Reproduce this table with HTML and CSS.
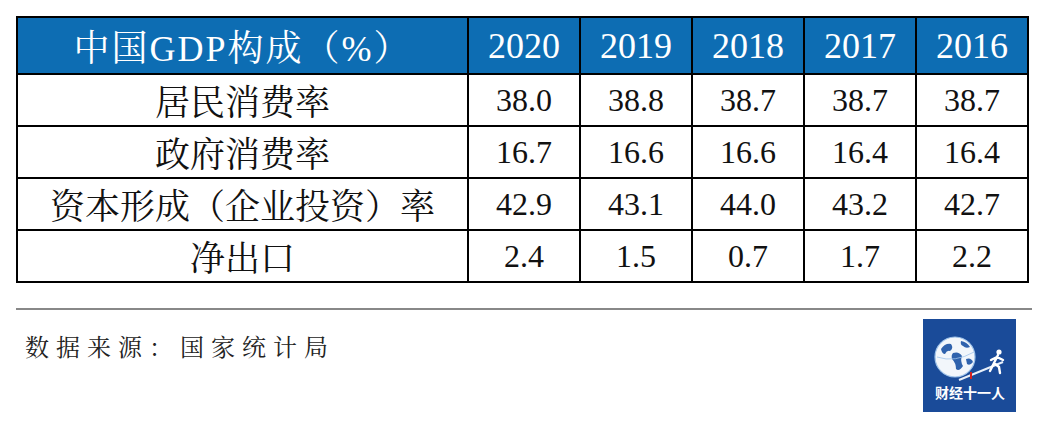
FILE: index.html
```html
<!DOCTYPE html>
<html lang="zh">
<head>
<meta charset="utf-8">
<link rel="stylesheet" href="styles.css">
</head>
<body>
<div class="page">
  <div class="grid">
    <div class="cell head label title">中国GDP构成（%）</div>
    <div class="cell head">2020</div>
    <div class="cell head">2019</div>
    <div class="cell head">2018</div>
    <div class="cell head">2017</div>
    <div class="cell head">2016</div>

    <div class="cell label">居民消费率</div>
    <div class="cell num">38.0</div>
    <div class="cell num">38.8</div>
    <div class="cell num">38.7</div>
    <div class="cell num">38.7</div>
    <div class="cell num">38.7</div>

    <div class="cell label">政府消费率</div>
    <div class="cell num">16.7</div>
    <div class="cell num">16.6</div>
    <div class="cell num">16.6</div>
    <div class="cell num">16.4</div>
    <div class="cell num">16.4</div>

    <div class="cell label">资本形成（企业投资）率</div>
    <div class="cell num">42.9</div>
    <div class="cell num">43.1</div>
    <div class="cell num">44.0</div>
    <div class="cell num">43.2</div>
    <div class="cell num">42.7</div>

    <div class="cell label">净出口</div>
    <div class="cell num">2.4</div>
    <div class="cell num">1.5</div>
    <div class="cell num">0.7</div>
    <div class="cell num">1.7</div>
    <div class="cell num">2.2</div>
  </div>

  <div class="rule"></div>

  <div class="footer">
    <div class="source">数据来源：国家统计局</div>
    <div class="logo">
      <svg width="93" height="93" viewBox="0 0 93 93">
        <rect x="0" y="0" width="93" height="93" fill="#1a4b99"/>
        <circle cx="32" cy="38" r="20" fill="#f2f6fb" stroke="#9fc3ea" stroke-width="1.2"/>
        <path d="M18 30 Q22 24 28 25 Q31 29 27 32 Q24 31 22 35 Q19 35 18 30 Z" fill="#2f62ad"/>
        <path d="M30 34 Q36 32 39 37 Q37 42 40 47 Q36 53 33 50 Q33 44 29 40 Q28 36 30 34 Z" fill="#2f62ad"/>
        <path d="M38 22 Q44 23 47 28 Q43 30 40 27 Q37 26 38 22 Z" fill="#2f62ad"/>
        <path d="M43 40 Q48 38 50 43 Q47 47 44 45 Z" fill="#2f62ad"/>
        <path d="M14 38 Q32 44 51 33" fill="none" stroke="#9fc3ea" stroke-width="0.8"/>
        <path d="M36 61 L80 43" stroke="#e8f0fa" stroke-width="2" fill="none"/>
        <path d="M48 53 L48 60" stroke="#d42020" stroke-width="2"/>
        <circle cx="76" cy="33" r="2.6" fill="#ffffff"/>
        <path d="M75 36 L71 44 L67 52 M71 44 L76 48 L77 54 M74 38 L80 41 M74 38 L68 41" stroke="#ffffff" stroke-width="2.4" fill="none" stroke-linecap="round"/>
        <text x="47" y="79" text-anchor="middle" class="logo-text">财经十一人</text>
      </svg>
    </div>
  </div>
</div>
</body>
</html>
```

FILE: styles.css
```css
html, body {
  margin: 0;
  padding: 0;
  background: #ffffff;
}

.page {
  width: 1044px;
  height: 428px;
  padding: 16px 0 0 16px;
  box-sizing: border-box;
  font-family: "Liberation Serif", "Noto Serif CJK SC", "Noto Sans CJK SC", serif;
}

.grid {
  width: 1013px;
  display: grid;
  grid-template-columns: 449px repeat(5, 110px);
  grid-template-rows: 55px repeat(4, 50px);
  gap: 2px;
  padding: 2px;
  box-sizing: border-box;
  background: #000000;
}

.cell {
  background: #ffffff;
  display: flex;
  align-items: center;
  justify-content: center;
  color: #111111;
  white-space: nowrap;
}

.head {
  background: #0d6db3;
  color: #ffffff;
  font-size: 36px;
}

.label {
  font-size: 35px;
}

.head.title {
  font-size: 36px;
  letter-spacing: 2px;
}

.num {
  font-size: 32px;
}

.rule {
  width: 1016px;
  height: 2px;
  background: #888888;
  margin-top: 25px;
}

.footer {
  display: flex;
  justify-content: space-between;
  align-items: flex-start;
  width: 1000px;
  padding-top: 9px;
}

.source {
  font-family: "Noto Serif CJK SC", "Noto Sans CJK SC", sans-serif;
  font-size: 24px;
  letter-spacing: 7px;
  color: #222222;
  padding-left: 9px;
  margin-top: 9px;
}

.logo {
  width: 93px;
  height: 93px;
}

.logo svg {
  display: block;
}

.logo-text {
  font-family: "Noto Sans CJK SC", sans-serif;
  font-size: 14px;
  font-weight: 700;
  fill: #ffffff;
}
```
